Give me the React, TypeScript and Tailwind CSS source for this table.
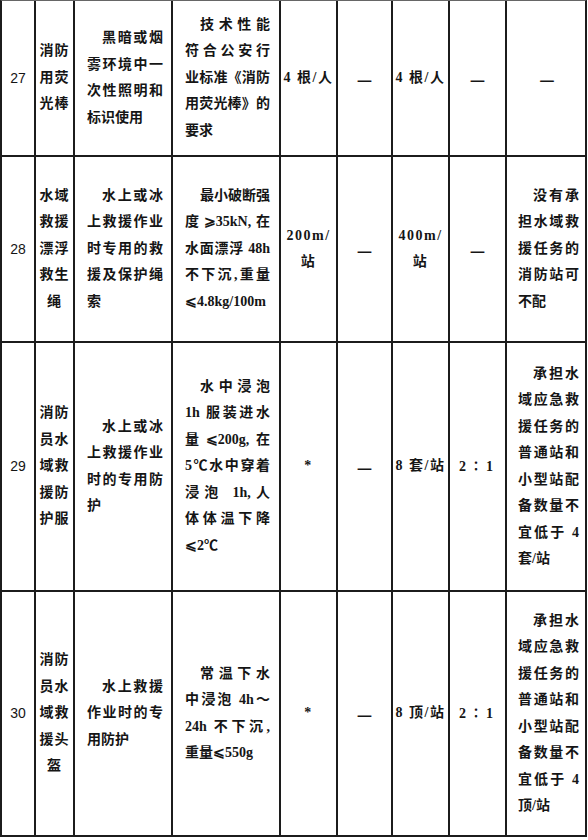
const serif = "font-['Liberation_Serif','Noto_Sans_CJK_SC',serif]";

type Row = {
  no: string;
  name: string[];
  use: string[];
  spec: string[];
  a: string[];
  b: string;
  c: string[];
  d: string;
  note: string[] | string;
};

const rows: Row[] = [
  {
    no: "27",
    name: ["消防", "用荧", "光棒"],
    use: ["黑暗或烟", "雾环境中一", "次性照明和", "标识使用"],
    spec: ["技术性能", "符合公安行", "业标准《消防", "用荧光棒》的", "要求"],
    a: ["4 根/人"],
    b: "—",
    c: ["4 根/人"],
    d: "—",
    note: "—",
  },
  {
    no: "28",
    name: ["水域", "救援", "漂浮", "救生", "绳"],
    use: ["水上或冰", "上救援作业", "时专用的救", "援及保护绳", "索"],
    spec: ["最小破断强", "度⩾35kN,在", "水面漂浮 48h", "不下沉,重量", "⩽4.8kg/100m"],
    a: ["200m/", "站"],
    b: "—",
    c: ["400m/", "站"],
    d: "—",
    note: ["没有承", "担水域救", "援任务的", "消防站可", "不配"],
  },
  {
    no: "29",
    name: ["消防", "员水", "域救", "援防", "护服"],
    use: ["水上或冰", "上救援作业", "时的专用防", "护"],
    spec: ["水中浸泡", "1h 服装进水", "量⩽200g,在", "5℃水中穿着", "浸泡 1h,人", "体体温下降", "⩽2℃"],
    a: ["*"],
    b: "—",
    c: ["8 套/站"],
    d: "2∶1",
    note: ["承担水", "域应急救", "援任务的", "普通站和", "小型站配", "备数量不", "宜低于 4", "套/站"],
  },
  {
    no: "30",
    name: ["消防", "员水", "域救", "援头", "盔"],
    use: ["水上救援", "作业时的专", "用防护"],
    spec: ["常温下水", "中浸泡 4h～", "24h 不下沉,", "重量⩽550g"],
    a: ["*"],
    b: "—",
    c: ["8 顶/站"],
    d: "2∶1",
    note: ["承担水", "域应急救", "援任务的", "普通站和", "小型站配", "备数量不", "宜低于 4", "顶/站"],
  },
];

function Cell({ children, last }: { children: React.ReactNode; last?: boolean }) {
  return (
    <div
      className={
        "flex min-w-0 items-center border-[#1c1c1c] " + (last ? "" : "border-r-2")
      }
    >
      {children}
    </div>
  );
}

// 首行缩进，中间行两端对齐，末行左齐
function Para({ lines, className }: { lines: string[]; className: string }) {
  return (
    <div className={"w-full leading-[26.5px] " + className}>
      {lines.map((line, i) => {
        const isLast = i === lines.length - 1;
        return (
          <div
            key={i}
            className={
              "whitespace-nowrap " +
              (i === 0 ? "pl-[15px] " : "") +
              (isLast ? "text-left" : "text-justify [text-align-last:justify]")
            }
          >
            {line}
          </div>
        );
      })}
    </div>
  );
}

function Centered({ lines, className = "" }: { lines: string[]; className?: string }) {
  return (
    <div className={"w-full text-center leading-[26.5px] " + className}>
      {lines.map((line, i) => (
        <div key={i} className="whitespace-nowrap">
          {line}
        </div>
      ))}
    </div>
  );
}

function Dash({ text }: { text: string }) {
  if (text !== "—") {
    return <div className="w-full text-center tracking-[3px]">{text}</div>;
  }
  return (
    <div className="w-full text-center font-['Noto_Sans_CJK_SC',sans-serif] text-[17px] font-bold leading-none">
      {text}
    </div>
  );
}

export default function App() {
  return (
    <div className="min-h-[840px] bg-white">
      <div
        className={
          "grid w-[587px] grid-cols-[34px_39px_98px_108px_57px_55px_57px_57px_80px] grid-rows-[156px_186px_249px_245px] border-l-2 border-t border-r-2 border-[#1c1c1c] border-t-[#666] text-[14px] font-semibold text-[#151515] " +
          serif
        }
      >
        {rows.map((r) => (
          <div key={r.no} className="col-span-9 grid grid-cols-subgrid border-b-2 border-[#1c1c1c]">
            <Cell>
              <div className="w-full text-center font-['Liberation_Sans',sans-serif] text-[14px] font-normal">
                {r.no}
              </div>
            </Cell>
            <Cell>
              <Centered lines={r.name} className="tracking-[1px]" />
            </Cell>
            <Cell>
              <Para lines={r.use} className="pl-[12px] pr-[8px]" />
            </Cell>
            <Cell>
              <Para lines={r.spec} className="pl-[12px] pr-[9px]" />
            </Cell>
            <Cell>
              <Centered lines={r.a} className="tracking-[1.5px]" />
            </Cell>
            <Cell>
              <Dash text={r.b} />
            </Cell>
            <Cell>
              <Centered lines={r.c} className="tracking-[1.5px]" />
            </Cell>
            <Cell>
              <Dash text={r.d} />
            </Cell>
            <Cell last>
              {typeof r.note === "string" ? (
                <Dash text={r.note} />
              ) : (
                <Para lines={r.note} className="pl-[11px] pr-[8px]" />
              )}
            </Cell>
          </div>
        ))}
      </div>
    </div>
  );
}
